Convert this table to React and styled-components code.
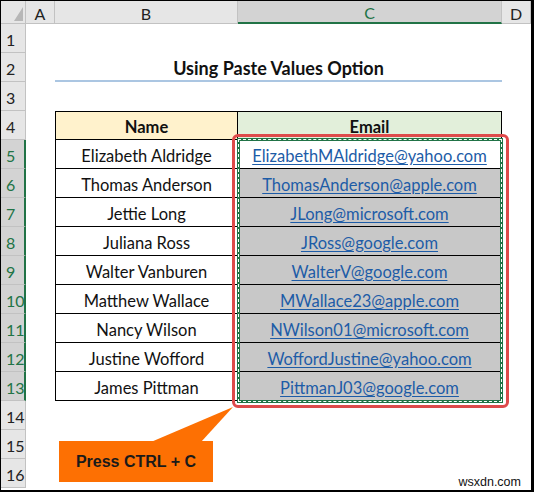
import React from 'react';
import styled, { createGlobalStyle, css } from 'styled-components';

const GREEN = '#217346';
const HEAD_BG = '#e6e6e6';
const HEAD_SEL = '#d3d3d3';
const HEAD_LINE = '#c2c2c2';

const people = [
  ['Elizabeth Aldridge', 'ElizabethMAldridge@yahoo.com'],
  ['Thomas Anderson', 'ThomasAnderson@apple.com'],
  ['Jettie Long', 'JLong@microsoft.com'],
  ['Juliana Ross', 'JRoss@google.com'],
  ['Walter Vanburen', 'WalterV@google.com'],
  ['Matthew Wallace', 'MWallace23@apple.com'],
  ['Nancy Wilson', 'NWilson01@microsoft.com'],
  ['Justine Wofford', 'WoffordJustine@yahoo.com'],
  ['James Pittman', 'PittmanJ03@google.com'],
];

const GlobalStyle = createGlobalStyle`
  html, body {
    margin: 0;
    padding: 0;
    background: #000;
  }
  body {
    width: 534px;
    height: 492px;
    overflow: hidden;
    font-family: Lato, "Noto Sans", sans-serif;
  }
`;

const Frame = styled.div`
  position: relative;
  margin: 1px 3px 2px 1px;
  width: 530px;
  height: 489px;
  background: #fff;
  overflow: hidden;
`;

const Sheet = styled.div`
  display: grid;
  grid-template-columns: 25px 29px 183px 264px 29px;
  grid-template-rows: 23px repeat(16, 29px);
  font-size: 16.5px;
  color: #111;
`;

const Corner = styled.div`
  position: relative;
  background: ${HEAD_BG};
  border-right: 1px solid ${HEAD_LINE};
  border-bottom: 1px solid ${HEAD_LINE};
  box-sizing: border-box;
  &::after {
    content: '';
    position: absolute;
    right: 2px;
    bottom: 2px;
    border-style: solid;
    border-width: 0 0 14px 9px;
    border-color: transparent transparent #b7b7b7 transparent;
  }
`;

const ColHeader = styled.div`
  display: flex;
  align-items: center;
  justify-content: center;
  padding-top: 2px;
  box-sizing: border-box;
  background: ${HEAD_BG};
  color: #222;
  font-size: 16px;
  border-right: 1px solid ${HEAD_LINE};
  border-bottom: 1px solid ${HEAD_LINE};
  ${(p) => p.$selected && css`
    background: ${HEAD_SEL};
    color: ${GREEN};
    border-bottom: 2px solid ${GREEN};
  `}
`;

const RowHeader = styled.div`
  display: flex;
  align-items: flex-end;
  padding: 0 0 3px 5px;
  box-sizing: border-box;
  background: ${HEAD_BG};
  color: #222;
  font-size: 16px;
  border-bottom: 1px solid ${HEAD_LINE};
  border-right: 1px solid ${HEAD_LINE};
  ${(p) => p.$selected && css`
    background: ${HEAD_SEL};
    color: ${GREEN};
    border-right: 2px solid ${GREEN};
  `}
`;

const Blank = styled.div``;

const Title = styled.div`
  grid-column: span 2;
  display: flex;
  align-items: center;
  justify-content: center;
  padding-top: 3px;
  box-sizing: border-box;
  font-weight: 700;
  font-size: 18px;
  border-bottom: 2px solid #abc6e2;
`;

const Cell = styled.div`
  display: flex;
  align-items: center;
  justify-content: center;
  padding-top: 3px;
  box-sizing: border-box;
  background: ${(p) => p.$bg || '#fff'};
  border-right: 1px solid #000;
  border-bottom: 1px solid #000;
  ${(p) => p.$first && css`border-left: 1px solid #000;`}
  ${(p) => p.$top && css`border-top: 1px solid #000;`}
  ${(p) => p.$head && css`font-weight: 700;`}
`;

const Link = styled.span`
  color: #1d5ca7;
  text-decoration: underline;
  text-underline-offset: 2px;
`;

const CopyFrame = styled.div`
  position: absolute;
  left: 231px;
  top: 133px;
  width: 277px;
  height: 274px;
  box-sizing: border-box;
  border: 3px solid #de4a4b;
  border-radius: 6px;
`;

const Ants = styled.div`
  position: absolute;
  left: 236px;
  top: 137px;
  width: 266px;
  height: 265px;
  box-sizing: border-box;
  border: 3px solid ${GREEN};
  &::after {
    content: '';
    position: absolute;
    inset: -2px;
    border: 1px dashed #fff;
  }
`;

const Pointer = styled.svg`
  position: absolute;
  left: 0;
  top: 0;
  width: 530px;
  height: 489px;
  pointer-events: none;
`;

const Callout = styled.div`
  position: absolute;
  left: 58px;
  top: 440px;
  width: 154px;
  height: 41px;
  display: flex;
  align-items: center;
  justify-content: center;
  background: #fd7003;
  color: #1a1a1a;
  font-family: "Liberation Sans", Arial, sans-serif;
  font-weight: 700;
  font-size: 16px;
`;

const Watermark = styled.div`
  position: absolute;
  right: 8px;
  bottom: 1px;
  padding: 0 2px;
  background: #fff;
  font-family: "Liberation Sans", Arial, sans-serif;
  font-size: 12.5px;
  color: #111;
`;

const selectedRows = (r) => r >= 5 && r <= 13;

const renderRow = (r) => {
  const cells = [<RowHeader key="h" $selected={selectedRows(r)}>{r}</RowHeader>, <Blank key="a" />];
  if (r === 2) {
    cells.push(<Title key="t">Using Paste Values Option</Title>);
  } else if (r === 4) {
    cells.push(<Cell key="b" $first $top $head $bg="#fff2cc">Name</Cell>);
    cells.push(<Cell key="c" $top $head $bg="#e2efda">Email</Cell>);
  } else if (r >= 5 && r <= 13) {
    const [name, email] = people[r - 5];
    cells.push(<Cell key="b" $first>{name}</Cell>);
    cells.push(
      <Cell key="c" $bg={r === 5 ? '#fff' : '#c8c8c8'}>
        <Link>{email}</Link>
      </Cell>
    );
  } else {
    cells.push(<Blank key="b" />, <Blank key="c" />);
  }
  cells.push(<Blank key="d" />);
  return <React.Fragment key={r}>{cells}</React.Fragment>;
};

const App = () => (
  <>
    <GlobalStyle />
    <Frame>
      <Sheet>
        <Corner />
        <ColHeader>A</ColHeader>
        <ColHeader>B</ColHeader>
        <ColHeader $selected>C</ColHeader>
        <ColHeader>D</ColHeader>
        {Array.from({ length: 16 }, (_, i) => renderRow(i + 1))}
      </Sheet>
      <CopyFrame />
      <Ants />
      <Pointer viewBox="0 0 530 489">
        <polygon points="150,441 200,441 232,406" fill="#fd7003" />
      </Pointer>
      <Callout>Press CTRL + C</Callout>
      <Watermark>wsxdn.com</Watermark>
    </Frame>
  </>
);

export default App;
